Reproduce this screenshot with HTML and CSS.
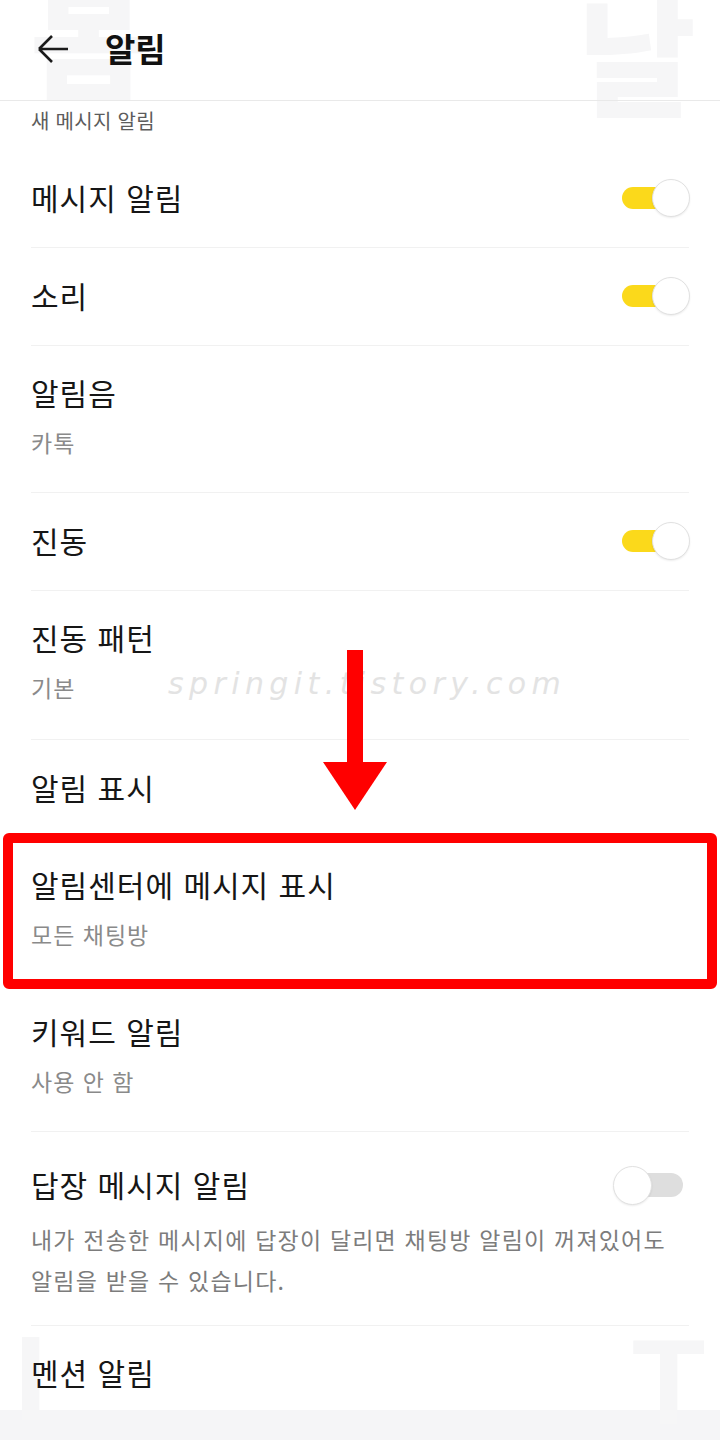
FILE: index.html
```html
<!DOCTYPE html>
<html lang="ko">
<head>
<meta charset="utf-8">
<title>알림</title>
<link rel="stylesheet" href="styles.css">
</head>
<body>
<div class="page">
  <div class="wm-layer" aria-hidden="true">
    <span class="wm wm-tl">봄</span>
    <span class="wm wm-tr">날</span>
    <span class="wm wm-bl">I</span>
    <span class="wm wm-br">T</span>
  </div>

  <header class="appbar">
    <svg class="back" width="32" height="30" viewBox="0 0 32 30">
      <path d="M2 15 H31 M2 15 L15 2 M2 15 L15 28" fill="none" stroke="#1b1b1b" stroke-width="2.6" stroke-linecap="butt"/>
    </svg>
    <h1 class="title">알림</h1>
  </header>

  <main class="list">
    <div class="section-label">새 메시지 알림</div>

    <div class="item single">
      <span class="item-title">메시지 알림</span>
      <span class="toggle on"><span class="track"></span><span class="knob"></span></span>
    </div>
    <div class="item single">
      <span class="item-title">소리</span>
      <span class="toggle on"><span class="track"></span><span class="knob"></span></span>
    </div>
    <div class="item double">
      <div class="item-title">알림음</div>
      <div class="item-sub">카톡</div>
    </div>
    <div class="item single">
      <span class="item-title">진동</span>
      <span class="toggle on"><span class="track"></span><span class="knob"></span></span>
    </div>
    <div class="item double tall">
      <div class="item-title">진동 패턴</div>
      <div class="item-sub">기본</div>
    </div>
    <div class="item single plain">
      <span class="item-title">알림 표시</span>
    </div>
    <div class="item double plain">
      <div class="item-title">알림센터에 메시지 표시</div>
      <div class="item-sub">모든 채팅방</div>
    </div>
    <div class="item double">
      <div class="item-title">키워드 알림</div>
      <div class="item-sub">사용 안 함</div>
    </div>
    <div class="item desc-item">
      <div class="desc-head">
        <span class="item-title">답장 메시지 알림</span>
        <span class="toggle off"><span class="track"></span><span class="knob"></span></span>
      </div>
      <p class="desc">내가 전송한 메시지에 답장이 달리면 채팅방 알림이 꺼져있어도 알림을 받을 수 있습니다.</p>
    </div>
    <div class="item last plain">
      <span class="item-title">멘션 알림</span>
    </div>
  </main>
  <div class="bottom-bar"></div>

  <div class="watermark" aria-hidden="true">springit.tistory.com</div>

  <svg class="red-arrow" width="64" height="160" viewBox="0 0 64 160" aria-hidden="true">
    <rect x="24" y="0" width="16" height="113" fill="#ff0000"/>
    <polygon points="0,112 64,112 32,160" fill="#ff0000"/>
  </svg>
  <div class="red-box" aria-hidden="true"></div>
</div>
</body>
</html>
```

FILE: styles.css
```css
* { box-sizing: border-box; }

html, body {
  margin: 0;
  padding: 0;
  background: #ffffff;
}

body {
  font-family: "Noto Sans CJK KR", "Noto Sans", sans-serif;
  color: #161616;
  width: 720px;
  height: 1440px;
  overflow: hidden;
}

.page {
  position: relative;
  width: 720px;
  height: 1440px;
  display: flex;
  flex-direction: column;
}

/* faint corner watermark glyphs */
.wm-layer {
  position: absolute;
  inset: 0;
  pointer-events: none;
}
.wm {
  position: absolute;
  font-family: "Noto Sans CJK KR", sans-serif;
  font-weight: 900;
  color: #f6f6f7;
  line-height: 1;
}
.wm-tl { left: 30px; top: -30px; font-size: 128px; }
.wm-tr { left: 578px; top: -12px; font-size: 128px; }
.wm-bl { left: 14px; top: 1318px; font-size: 120px; font-family: "Liberation Sans", sans-serif; }
.wm-br { left: 632px; top: 1322px; font-size: 120px; font-family: "Liberation Sans", sans-serif; }

.appbar {
  position: relative;
  height: 101px;
  flex: none;
  display: flex;
  align-items: center;
  padding: 0 0 4px 37px;
  border-bottom: 1px solid #e9e9e9;
}
.back { display: block; margin-top: 2px; }
.title {
  margin: 0 0 0 36px;
  font-size: 33px;
  font-weight: 700;
  letter-spacing: 0;
  color: #111;
  line-height: 1;
}

.list {
  position: relative;
  flex: 1;
  padding: 0 31px;
}

.section-label {
  font-size: 20px;
  color: #5c5c5c;
  line-height: 28px;
  padding-top: 6px;
  height: 49px;
  letter-spacing: 0.3px;
}

.item {
  display: flex;
  border-bottom: 1px solid #f1f1f1;
}
.item.plain { border-bottom-color: transparent; }

.item-title {
  font-size: 30px;
  line-height: 34px;
  color: #161616;
  letter-spacing: 1px;
}
.item-sub {
  font-size: 23px;
  line-height: 30px;
  color: #8a8a8a;
  margin-top: 18px;
  letter-spacing: 1px;
}

.single {
  height: 98px;
  align-items: center;
  justify-content: space-between;
  padding-bottom: 4px;
}
.double {
  flex-direction: column;
  height: 147px;
  padding-top: 29px;
}
.double.tall { height: 149px; }

.desc-item {
  flex-direction: column;
  height: 194px;
  padding-top: 31px;
}
.desc-head {
  display: flex;
  align-items: center;
  justify-content: space-between;
}
.desc {
  margin: 14px 0 0;
  font-size: 23px;
  line-height: 41px;
  color: #7c7c7c;
  letter-spacing: 1.2px;
  padding-right: 0;
}

.last {
  height: 84px;
  align-items: flex-start;
  padding-top: 29px;
}

.bottom-bar {
  flex: none;
  height: 30px;
  background: #f5f5f7;
}

/* toggles */
.toggle {
  position: relative;
  width: 68px;
  height: 40px;
  flex: none;
  margin-right: -1px;
  margin-top: 2px;
}
.toggle .track {
  position: absolute;
  top: 9px;
  height: 22px;
  border-radius: 11px;
}
.toggle .knob {
  position: absolute;
  top: 1px;
  width: 38px;
  height: 38px;
  border-radius: 50%;
  background: #ffffff;
  border: 1px solid #e1e1e1;
  box-shadow: 0 1px 2px rgba(0,0,0,0.08);
}
.toggle.on .track { left: 0; width: 58px; background: #fbd91b; }
.toggle.on .knob { right: 0; }

.toggle.off { width: 70px; margin-right: 6px; }
.toggle.off .track { left: 16px; width: 54px; top: 8px; height: 24px; border-radius: 12px; background: #dedede; }
.toggle.off .knob { left: 0; width: 39px; height: 39px; }

/* overlays */
.watermark {
  position: absolute;
  left: 168px;
  top: 662px;
  font-family: "DejaVu Sans", sans-serif;
  font-style: italic;
  font-weight: 300;
  font-size: 30px;
  letter-spacing: 5.4px;
  color: #e3e3e3;
  line-height: 44px;
  white-space: nowrap;
  pointer-events: none;
}

.red-arrow {
  position: absolute;
  left: 323px;
  top: 650px;
}

.red-box {
  position: absolute;
  left: 3px;
  top: 833px;
  width: 714px;
  height: 156px;
  border: 10px solid #ff0000;
  border-radius: 6px;
  pointer-events: none;
}
```
